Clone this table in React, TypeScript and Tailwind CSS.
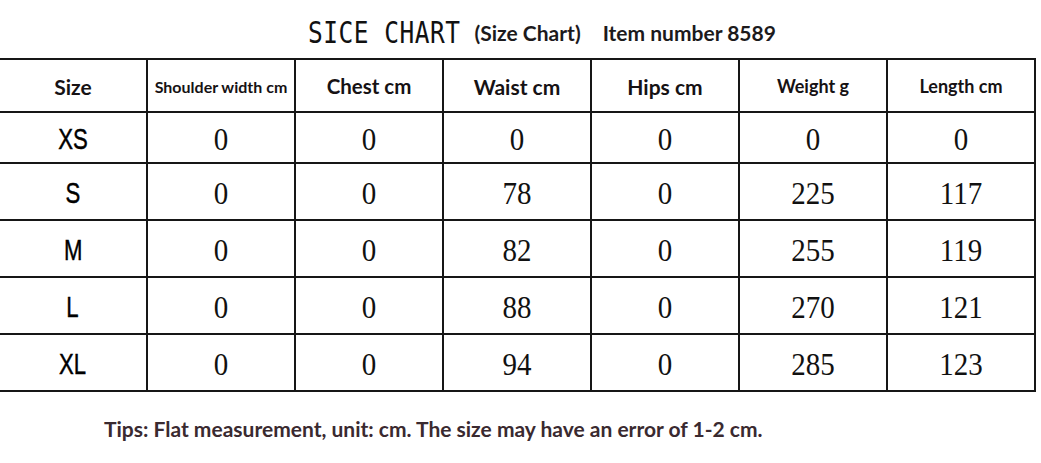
const headers = [
  { label: "Size", cls: "text-[21px]" },
  { label: "Shoulder width cm", cls: "text-[16px]" },
  { label: "Chest cm", cls: "text-[20.5px]" },
  { label: "Waist cm", cls: "text-[21px]" },
  { label: "Hips cm", cls: "text-[21px]" },
  { label: "Weight g", cls: "text-[18px]" },
  { label: "Length cm", cls: "text-[18px]" },
];

const rows = [
  { size: "XS", values: [0, 0, 0, 0, 0, 0], h: "h-[51px]" },
  { size: "S", values: [0, 0, 78, 0, 225, 117], h: "h-[57px]" },
  { size: "M", values: [0, 0, 82, 0, 255, 119], h: "h-[57px]" },
  { size: "L", values: [0, 0, 88, 0, 270, 121], h: "h-[57px]" },
  { size: "XL", values: [0, 0, 94, 0, 285, 123], h: "h-[57px]" },
];

const lato = "font-['Lato','Liberation_Sans',sans-serif]";

export default function App() {
  return (
    <div className="h-[463px] w-[1041px] overflow-hidden bg-white text-[#111]">
      <div className="flex h-[58px] items-center pl-[308px] pt-[8px]">
        <span className="inline-block scale-y-[1.2] font-['DejaVu_Sans_Mono',monospace] text-[24.5px] leading-none tracking-[0.5px] text-[#111]">
          SICE CHART
        </span>
        <span className={`ml-[14px] ${lato} text-[21px] font-bold text-[#1c1a1c]`}>
          (Size Chart)
        </span>
        <span className={`ml-[22px] ${lato} text-[21px] font-bold text-[#1c1a1c]`}>
          Item number 8589
        </span>
      </div>

      <div className="grid w-[1036px] grid-cols-[148px_repeat(6,148px)] border-t-2 border-[#161616]">
        {headers.map((h) => (
          <div
            key={h.label}
            className={`flex h-[53px] items-center justify-center border-r-2 border-b-2 border-[#161616] pt-[2px] ${lato} font-bold text-[#161214] ${h.cls}`}
          >
            {h.label}
          </div>
        ))}
        {rows.map((r) => (
          <div key={r.size} className="contents">
            <div
              className={`flex ${r.h} items-center justify-center border-r-2 border-b-2 border-[#161616] pt-[4px]`}
            >
              <span className="inline-block scale-x-[0.82] scale-y-[1.12] font-['Liberation_Sans',sans-serif] text-[27px] leading-none text-black [-webkit-text-stroke:0.4px_#000]">
                {r.size}
              </span>
            </div>
            {r.values.map((v, i) => (
              <div
                key={i}
                className={`flex ${r.h} items-center justify-center border-r-2 border-b-2 border-[#161616] pt-[4px]`}
              >
                <span className="inline-block scale-y-[1.12] font-['Liberation_Serif',serif] text-[29px] leading-none text-[#111]">
                  {v}
                </span>
              </div>
            ))}
          </div>
        ))}
      </div>

      <div className={`pl-[104px] pt-[21px] ${lato} text-[21px] font-bold text-[#3a2a30]`}>
        Tips: Flat measurement, unit: cm. The size may have an error of 1-2 cm.
      </div>
    </div>
  );
}
